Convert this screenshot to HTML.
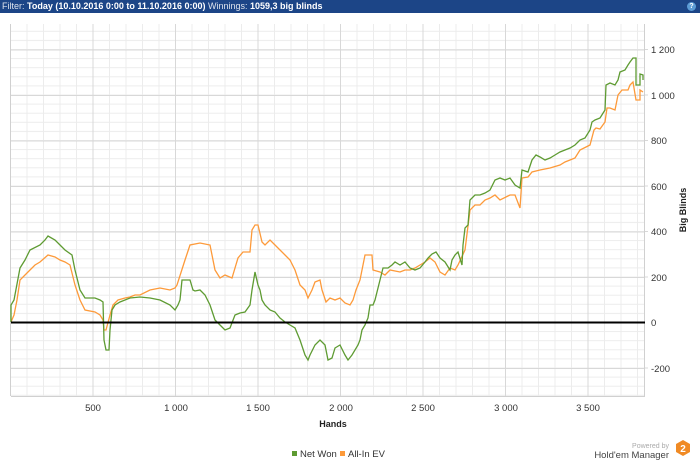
<!DOCTYPE html>
<html><head><style>
body{margin:0;width:700px;height:464px;background:#fff;font-family:"Liberation Sans",sans-serif;overflow:hidden;position:relative}
.hdr{position:absolute;left:0;top:0;width:700px;height:13px;background:#1c4587;color:#fff;font-size:9px;line-height:13px;padding-left:2px;box-sizing:border-box}
.hdr b{font-weight:bold}
.q{position:absolute;right:4px;top:2px;width:9px;height:9px;border-radius:50%;background:#5b9bd5;color:#fff;font-size:7px;line-height:9px;text-align:center;font-weight:bold}
svg{position:absolute;left:0;top:0}
</style></head><body>
<div class="hdr"><span style="opacity:.85">Filter:</span> <b>Today (10.10.2016 0:00 to 11.10.2016 0:00)</b> <span style="opacity:.85">Winnings:</span> <b>1059,3 big blinds</b></div>
<div class="q">?</div>
<svg width="700" height="464" font-family="Liberation Sans, sans-serif">
<defs>
<pattern id="mn" patternUnits="userSpaceOnUse" x="10" y="3.5" width="16.5" height="9.1">
<rect x="0" y="0" width="16.5" height="1" fill="#ececec"/><rect x="0" y="0" width="1" height="9.1" fill="#ececec"/>
</pattern>
<pattern id="mj" patternUnits="userSpaceOnUse" x="10" y="4" width="82.5" height="45.5">
<rect x="0" y="0" width="82.5" height="1" fill="#d8d8d8"/><rect x="0" y="0" width="1" height="45.5" fill="#d8d8d8"/>
</pattern>
</defs>
<rect x="11" y="24" width="637" height="372" fill="url(#mn)"/>
<rect x="11" y="24" width="637" height="372" fill="url(#mj)"/>
<rect x="645" y="24" width="3" height="372" fill="#fff"/>
<line x1="10.5" y1="24" x2="10.5" y2="396" stroke="#d0d0d0"/>
<line x1="11" y1="396.5" x2="645" y2="396.5" stroke="#d0d0d0"/>
<line x1="644.5" y1="24" x2="644.5" y2="396" stroke="#d0d0d0"/>
<g stroke="#d8d8d8"><line x1="645" y1="49.5" x2="648" y2="49.5"/><line x1="645" y1="95" x2="648" y2="95"/><line x1="645" y1="140.5" x2="648" y2="140.5"/><line x1="645" y1="186" x2="648" y2="186"/><line x1="645" y1="231.5" x2="648" y2="231.5"/><line x1="645" y1="277" x2="648" y2="277"/><line x1="645" y1="368" x2="648" y2="368"/></g>
<polyline fill="none" stroke="#fd9a3a" stroke-width="1.3" points="11,322 14,315 17,300 20,280 25,275 30,270 35,265 40,262 48,255 55,257 60,260 65,262 70,265 75,285 80,300 85,310 95,312 100,315 103,320 104,330 106,330 110,315 113,305 118,300 125,298 130,297 135,295 140,295 150,290 160,288 170,290 175,288 177,285 185,260 190,245 200,243 210,245 215,270 220,278 225,275 232,278 238,258 243,252 250,252 252,230 255,225 258,225 262,242 265,245 270,240 275,245 280,250 285,255 290,260 295,270 300,285 305,290 308,298 312,290 315,282 320,280 322,290 326,302 330,298 335,300 340,298 345,303 350,305 353,300 356,290 360,280 363,265 365,255 372,255 373,270 380,272 385,275 390,270 400,272 405,270 410,270 415,268 420,265 425,262 430,258 435,262 440,272 445,275 450,268 455,270 458,265 465,250 470,210 475,205 480,205 485,200 490,198 495,195 500,200 510,195 515,195 520,208 522,178 528,177 532,172 540,170 550,168 560,165 565,162 570,160 575,158 580,150 590,145 594,130 596,128 600,129 605,122 607,108 610,108 615,110 618,95 622,90 628,90 630,85 633,82 636,100 640,100 640,90 643,92"/>
<polyline fill="none" stroke="#5e9b32" stroke-width="1.3" points="11,322 11,305 14,300 20,268 25,260 30,250 40,245 45,240 48,236 55,240 60,245 65,250 72,255 75,270 80,290 85,298 95,298 100,300 103,302 104,340 106,350 109,350 110,330 112,310 115,305 120,302 130,298 140,297 150,298 160,300 170,305 175,310 178,305 180,300 182,280 190,280 193,290 195,291 200,290 205,295 210,305 215,320 220,325 225,330 230,328 235,315 240,313 245,312 250,305 252,290 255,272 258,285 260,290 262,300 265,305 270,310 275,312 280,318 285,322 290,325 295,328 300,340 305,355 308,360 310,355 315,345 320,340 325,345 328,360 332,358 335,348 340,345 345,355 348,360 352,355 358,345 360,340 362,330 365,325 368,318 370,305 373,305 375,300 380,280 383,268 388,268 392,265 395,262 400,265 405,262 410,268 415,270 420,268 425,262 428,258 432,254 436,252 440,258 445,262 450,270 452,260 455,255 458,252 462,265 463,245 465,228 468,225 470,200 475,195 480,195 485,193 490,190 495,180 500,178 505,180 510,178 515,185 520,188 522,170 528,172 532,160 536,155 540,157 545,160 550,158 555,155 560,152 565,150 570,148 575,145 580,140 585,138 590,130 592,122 595,120 600,118 605,110 606,85 610,83 615,85 618,80 620,72 625,70 628,65 630,62 633,58 636,58 636,85 640,85 640,74 643,75 643,80"/>
<line x1="11" y1="322.5" x2="645" y2="322.5" stroke="#000" stroke-width="2"/>
<g font-size="9.5" fill="#333">
<text x="651" y="53">1 200</text><text x="651" y="99">1 000</text><text x="651" y="144">800</text><text x="651" y="190">600</text><text x="651" y="235">400</text><text x="651" y="281">200</text><text x="651" y="326">0</text><text x="651" y="372">-200</text>
<g text-anchor="middle"><text x="93" y="411">500</text><text x="176" y="411">1 000</text><text x="258" y="411">1 500</text><text x="341" y="411">2 000</text><text x="423" y="411">2 500</text><text x="506" y="411">3 000</text><text x="588" y="411">3 500</text></g>
</g>
<text x="333" y="427" text-anchor="middle" font-size="9" font-weight="bold" fill="#222">Hands</text>
<text transform="translate(686,210) rotate(-90)" text-anchor="middle" font-size="9" font-weight="bold" fill="#222">Big Blinds</text>
<rect x="292" y="451" width="5" height="5" fill="#5e9b32"/>
<text x="300" y="457" font-size="9.5" fill="#333">Net Won</text>
<rect x="340" y="451" width="5" height="5" fill="#fd9a3a"/>
<text x="348" y="457" font-size="9.5" fill="#333">All-In EV</text>
<text x="669" y="448" text-anchor="end" font-size="7" fill="#aaa">Powered by</text>
<text x="669" y="458" text-anchor="end" font-size="9.5" fill="#444">Hold'em Manager</text>
<polygon points="683,440 690,444 690,452 683,456 676,452 676,444" fill="#f08a24"/>
<text x="683" y="452" text-anchor="middle" font-size="10" font-weight="bold" fill="#fff">2</text>
</svg>
</body></html>
